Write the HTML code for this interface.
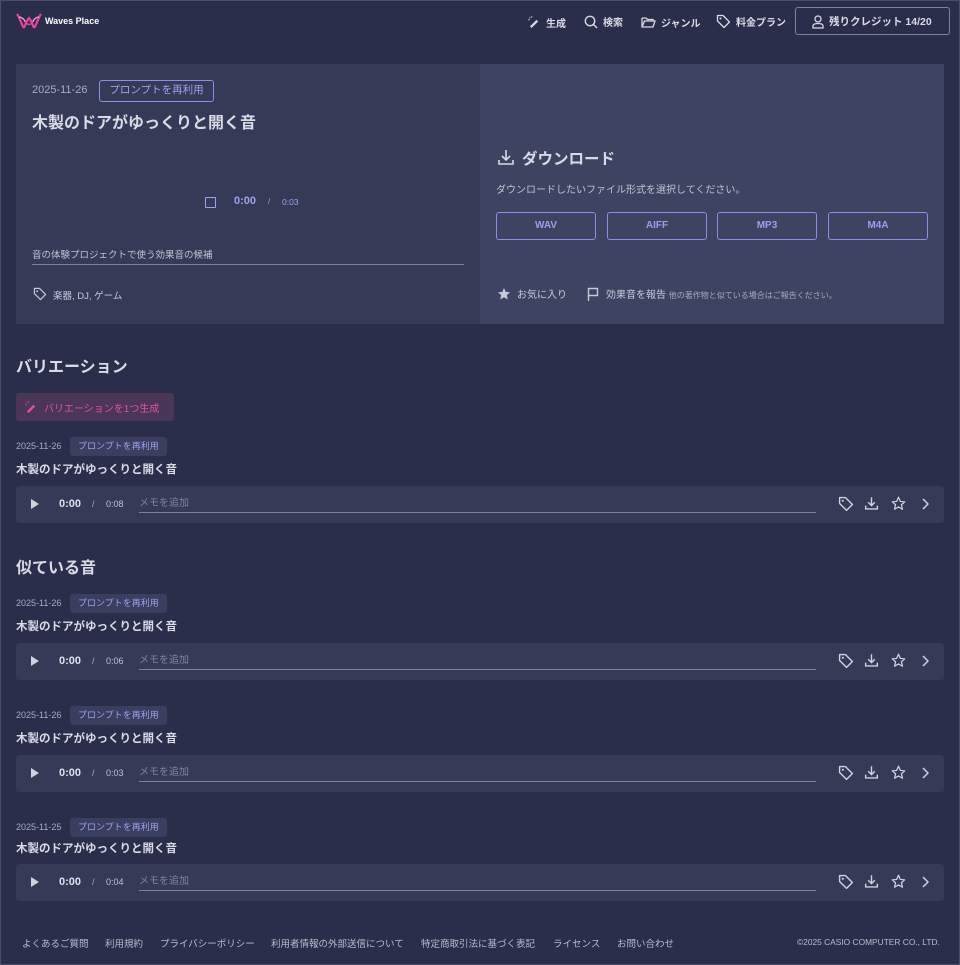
<!DOCTYPE html>
<html><head><meta charset="utf-8"><style>
*{box-sizing:border-box;margin:0;padding:0}
body{width:960px;height:965px;background:#2b2e4a;font-family:"Liberation Sans","Noto Sans CJK JP",sans-serif;color:#d6d8e6;position:relative;overflow:hidden}
.frame{position:absolute;left:0;top:0;width:960px;height:965px;border:1px solid #4a4e6a;pointer-events:none}
.a{position:absolute}
.nav{font-size:10px;font-weight:bold;color:#d8dae6;display:flex;align-items:center;gap:5px}
svg{display:block}
.fmt{position:absolute;top:212px;width:100px;height:28px;border:1.5px solid #8a8ee8;border-radius:3px;color:#9a9ef0;font-size:10px;font-weight:bold;text-align:center;line-height:25px}
.date{font-size:9px;color:#a8abc0}
.chip{font-size:9px;color:#9da2ee;background:#3a3f60;border-radius:3px;padding:0 8px;height:19px;line-height:19px}
.ttl{font-size:11.5px;font-weight:bold;color:#d8dae6}
.row{position:absolute;left:16px;width:928px;height:37px;background:#353a57;border-radius:3px}
.row .pl{position:absolute;left:14px;top:12px}
.row .t0{position:absolute;left:43px;top:12px;font-size:11px;font-weight:bold;color:#e0e2ee}
.row .sl{position:absolute;left:76px;top:13px;font-size:9px;color:#aab}
.row .td{position:absolute;left:90px;top:13px;font-size:9px;color:#c0c2d2}
.row .memo{position:absolute;left:123px;top:8px;width:677px;height:19px;border-bottom:1px solid #7a7f9c;font-size:10px;color:#7f849e}
.row .ic{position:absolute;top:10px}
.ft{font-size:9.5px;color:#b9bccd}
</style></head><body>
<svg class="a" style="left:16px;top:12px" width="26" height="18" viewBox="0 0 26 18"><path d="M1 2 C4 6 5 12 8 16 M8 16 C10 11 11 8 13 6 C15 8 16 11 18 16 M18 16 C21 12 22 6 25 2" stroke="#e8439f" stroke-width="2.2" fill="none"/><path d="M3 5 C6 5 9 8 9 10 M23 5 C20 5 17 8 17 10" stroke="#f4a6d2" stroke-width="1.2" fill="none"/><circle cx="13" cy="10" r="2.5" stroke="#e8439f" stroke-width="1.5" fill="none"/></svg>
<div class="a" style="left:45px;top:16px;font-size:9px;font-weight:bold;color:#fff">Waves Place</div>
<div class="a nav" style="left:528px;top:15px"><svg width="13" height="13" viewBox="0 0 14 14"><path d="M3 12 L10 5" stroke="#d8dae6" stroke-width="2.5"/><circle cx="2" cy="2" r=".7" fill="#d8dae6"/><circle cx="4" cy="1" r=".7" fill="#d8dae6"/><circle cx="1" cy="4" r=".7" fill="#d8dae6"/></svg>生成</div>
<div class="a nav" style="left:584px;top:14px"><svg width="14" height="14" viewBox="0 0 14 14"><circle cx="6" cy="6" r="4.7" stroke="#d8dae6" stroke-width="1.4" fill="none"/><path d="M9.5 9.5 L13 13" stroke="#d8dae6" stroke-width="1.4"/></svg>検索</div>
<div class="a nav" style="left:641px;top:15px"><svg width="15" height="13" viewBox="0 0 15 13"><path d="M1 2 H5 L6.5 3.5 H12 V5 M1 2 V11 H12 L14 5 H3.5 L1 11" stroke="#d8dae6" stroke-width="1.3" fill="none"/></svg>ジャンル</div>
<div class="a nav" style="left:716px;top:14px"><svg width="15" height="15" viewBox="0 0 15 15"><path d="M1.5 1.5 H7 L13.5 8 L8 13.5 L1.5 7 Z" stroke="#d8dae6" stroke-width="1.3" fill="none" stroke-linejoin="round"/><circle cx="4.5" cy="4.5" r="1" fill="#d8dae6"/></svg>料金プラン</div>
<div class="a" style="left:795px;top:7px;width:155px;height:28px;border:1px solid #7d82a0;border-radius:3px"></div>
<div class="a nav" style="left:812px;top:14px;font-size:10.5px"><svg width="12" height="14" viewBox="0 0 12 14"><circle cx="6" cy="4" r="3" stroke="#d8dae6" stroke-width="1.3" fill="none"/><path d="M1 13 V11 C1 9 3 8.5 6 8.5 C9 8.5 11 9 11 11 V13 Z" stroke="#d8dae6" stroke-width="1.3" fill="none"/></svg>残りクレジット 14/20</div>
<div class="a" style="left:16px;top:64px;width:464px;height:260px;background:#353a57"></div>
<div class="a" style="left:480px;top:64px;width:464px;height:260px;background:#3c4461"></div>
<div class="a" style="left:32px;top:84px;font-size:11px;color:#a8abc0">2025-11-26</div>
<div class="a" style="left:99px;top:80px;width:115px;height:22px;border:1.3px solid #8a8ee8;border-radius:3px;font-size:10.5px;color:#9ea2f0;text-align:center;line-height:19px">プロンプトを再利用</div>
<div class="a" style="left:32px;top:109px;font-size:16px;font-weight:bold;color:#d8dae6">木製のドアがゆっくりと開く音</div>
<div class="a" style="left:205px;top:197px;width:11px;height:11px;border:1.5px solid #9ea2f0;border-radius:1px"></div>
<div class="a" style="left:234px;top:195px;font-size:11px;font-weight:bold;color:#9ea2f0">0:00</div>
<div class="a" style="left:268px;top:197px;font-size:8px;color:#9ea2f0">/</div>
<div class="a" style="left:282px;top:197px;font-size:8.5px;color:#9ea2f0">0:03</div>
<div class="a" style="left:32px;top:247px;width:432px;height:18px;border-bottom:1px solid #7a7f9c;font-size:9.5px;color:#c0c2d2">音の体験プロジェクトで使う効果音の候補</div>
<svg class="a" style="left:33px;top:287px" width="14" height="14" viewBox="0 0 15 15"><path d="M1.5 1.5 H7 L13.5 8 L8 13.5 L1.5 7 Z" stroke="#c8cadb" stroke-width="1.3" fill="none" stroke-linejoin="round"/><circle cx="4.5" cy="4.5" r="1" fill="#c8cadb"/></svg>
<div class="a" style="left:53px;top:288px;font-size:9.5px;color:#c8cadb">楽器, DJ, ゲーム</div>
<svg class="a" style="left:497px;top:149px" width="18" height="17" viewBox="0 0 18 17"><path d="M9 1 V11 M5 7 L9 11 L13 7 M2 11 V15 H16 V11" stroke="#d8dae6" stroke-width="1.6" fill="none"/></svg>
<div class="a" style="left:522px;top:147px;font-size:15.5px;font-weight:bold;color:#d8dae6">ダウンロード</div>
<div class="a" style="left:496px;top:181px;font-size:10px;color:#c0c2d2">ダウンロードしたいファイル形式を選択してください。</div>
<div class="fmt" style="left:496px">WAV</div>
<div class="fmt" style="left:607px">AIFF</div>
<div class="fmt" style="left:717px">MP3</div>
<div class="fmt" style="left:828px">M4A</div>
<svg class="a" style="left:497px;top:287px" width="14" height="14" viewBox="0 0 24 24"><path d="M12 1.5 L15 8.5 L22.5 9 L16.8 14 L18.5 21.5 L12 17.5 L5.5 21.5 L7.2 14 L1.5 9 L9 8.5 Z" fill="#c8cadb"/></svg>
<div class="a" style="left:517px;top:286px;font-size:10px;color:#c8cadb">お気に入り</div>
<svg class="a" style="left:587px;top:287px" width="12" height="14" viewBox="0 0 12 14"><path d="M1.5 14 V1.5 H10.5 V8.5 H1.5" stroke="#c8cadb" stroke-width="1.4" fill="none"/></svg>
<div class="a" style="left:606px;top:286px;font-size:10px;color:#c8cadb">効果音を報告 <span style="font-size:8px;color:#a8abc0">他の著作物と似ている場合はご報告ください。</span></div>
<div class="a" style="left:16px;top:353px;font-size:16px;font-weight:bold;color:#d8dae6">バリエーション</div>
<div class="a" style="left:16px;top:393px;width:158px;height:28px;background:#4a3657;border-radius:3px"></div>
<svg class="a" style="left:25px;top:401px" width="13" height="13" viewBox="0 0 14 14"><path d="M3 12 L10 5" stroke="#e54fa8" stroke-width="2.6"/><circle cx="2" cy="2" r=".7" fill="#e54fa8"/><circle cx="4" cy="1" r=".7" fill="#e54fa8"/><circle cx="1" cy="4" r=".7" fill="#e54fa8"/></svg>
<div class="a" style="left:44px;top:400px;font-size:10px;color:#e54fa8">バリエーションを1つ生成</div>

<div class="a date" style="left:16px;top:441px">2025-11-26</div><div class="a chip" style="left:70px;top:437px">プロンプトを再利用</div>
<div class="a ttl" style="left:16px;top:461px">木製のドアがゆっくりと開く音</div>
<div class="row" style="top:486px"><svg class="pl" width="10" height="12"><path d="M1 1 L9 6 L1 11Z" fill="#d0d2e0"/></svg><div class="t0">0:00</div><div class="sl">/</div><div class="td">0:08</div><div class="memo">メモを追加</div><svg class="ic" style="left:822px" width="16" height="16" viewBox="0 0 15 15"><path d="M1.5 1.5 H7 L13.5 8 L8 13.5 L1.5 7 Z" stroke="#d0d2e0" stroke-width="1.3" fill="none" stroke-linejoin="round"/><circle cx="4.5" cy="4.5" r="1" fill="#d0d2e0"/></svg><svg class="ic" style="left:848px" width="15" height="15" viewBox="0 0 18 17"><path d="M9 1 V11 M5 7 L9 11 L13 7 M2 11 V15 H16 V11" stroke="#d0d2e0" stroke-width="1.7" fill="none"/></svg><svg class="ic" style="left:875px" width="15" height="15" viewBox="0 0 24 24"><path d="M12 2 L15 8.7 L22 9.3 L16.7 14 L18.3 21.2 L12 17.4 L5.7 21.2 L7.3 14 L2 9.3 L9 8.7 Z" stroke="#d0d2e0" stroke-width="2" fill="none" stroke-linejoin="round"/></svg><svg class="ic" style="left:905px;top:12px" width="8" height="12"><path d="M2 1 L7 6 L2 11" stroke="#d0d2e0" stroke-width="1.5" fill="none"/></svg></div>

<div class="a" style="left:16px;top:554px;font-size:16px;font-weight:bold;color:#d8dae6">似ている音</div>

<div class="a date" style="left:16px;top:598px">2025-11-26</div><div class="a chip" style="left:70px;top:594px">プロンプトを再利用</div>
<div class="a ttl" style="left:16px;top:618px">木製のドアがゆっくりと開く音</div>
<div class="row" style="top:643px"><svg class="pl" width="10" height="12"><path d="M1 1 L9 6 L1 11Z" fill="#d0d2e0"/></svg><div class="t0">0:00</div><div class="sl">/</div><div class="td">0:06</div><div class="memo">メモを追加</div><svg class="ic" style="left:822px" width="16" height="16" viewBox="0 0 15 15"><path d="M1.5 1.5 H7 L13.5 8 L8 13.5 L1.5 7 Z" stroke="#d0d2e0" stroke-width="1.3" fill="none" stroke-linejoin="round"/><circle cx="4.5" cy="4.5" r="1" fill="#d0d2e0"/></svg><svg class="ic" style="left:848px" width="15" height="15" viewBox="0 0 18 17"><path d="M9 1 V11 M5 7 L9 11 L13 7 M2 11 V15 H16 V11" stroke="#d0d2e0" stroke-width="1.7" fill="none"/></svg><svg class="ic" style="left:875px" width="15" height="15" viewBox="0 0 24 24"><path d="M12 2 L15 8.7 L22 9.3 L16.7 14 L18.3 21.2 L12 17.4 L5.7 21.2 L7.3 14 L2 9.3 L9 8.7 Z" stroke="#d0d2e0" stroke-width="2" fill="none" stroke-linejoin="round"/></svg><svg class="ic" style="left:905px;top:12px" width="8" height="12"><path d="M2 1 L7 6 L2 11" stroke="#d0d2e0" stroke-width="1.5" fill="none"/></svg></div>

<div class="a date" style="left:16px;top:710px">2025-11-26</div><div class="a chip" style="left:70px;top:706px">プロンプトを再利用</div>
<div class="a ttl" style="left:16px;top:730px">木製のドアがゆっくりと開く音</div>
<div class="row" style="top:755px"><svg class="pl" width="10" height="12"><path d="M1 1 L9 6 L1 11Z" fill="#d0d2e0"/></svg><div class="t0">0:00</div><div class="sl">/</div><div class="td">0:03</div><div class="memo">メモを追加</div><svg class="ic" style="left:822px" width="16" height="16" viewBox="0 0 15 15"><path d="M1.5 1.5 H7 L13.5 8 L8 13.5 L1.5 7 Z" stroke="#d0d2e0" stroke-width="1.3" fill="none" stroke-linejoin="round"/><circle cx="4.5" cy="4.5" r="1" fill="#d0d2e0"/></svg><svg class="ic" style="left:848px" width="15" height="15" viewBox="0 0 18 17"><path d="M9 1 V11 M5 7 L9 11 L13 7 M2 11 V15 H16 V11" stroke="#d0d2e0" stroke-width="1.7" fill="none"/></svg><svg class="ic" style="left:875px" width="15" height="15" viewBox="0 0 24 24"><path d="M12 2 L15 8.7 L22 9.3 L16.7 14 L18.3 21.2 L12 17.4 L5.7 21.2 L7.3 14 L2 9.3 L9 8.7 Z" stroke="#d0d2e0" stroke-width="2" fill="none" stroke-linejoin="round"/></svg><svg class="ic" style="left:905px;top:12px" width="8" height="12"><path d="M2 1 L7 6 L2 11" stroke="#d0d2e0" stroke-width="1.5" fill="none"/></svg></div>

<div class="a date" style="left:16px;top:822px">2025-11-25</div><div class="a chip" style="left:70px;top:818px">プロンプトを再利用</div>
<div class="a ttl" style="left:16px;top:840px">木製のドアがゆっくりと開く音</div>
<div class="row" style="top:864px"><svg class="pl" width="10" height="12"><path d="M1 1 L9 6 L1 11Z" fill="#d0d2e0"/></svg><div class="t0">0:00</div><div class="sl">/</div><div class="td">0:04</div><div class="memo">メモを追加</div><svg class="ic" style="left:822px" width="16" height="16" viewBox="0 0 15 15"><path d="M1.5 1.5 H7 L13.5 8 L8 13.5 L1.5 7 Z" stroke="#d0d2e0" stroke-width="1.3" fill="none" stroke-linejoin="round"/><circle cx="4.5" cy="4.5" r="1" fill="#d0d2e0"/></svg><svg class="ic" style="left:848px" width="15" height="15" viewBox="0 0 18 17"><path d="M9 1 V11 M5 7 L9 11 L13 7 M2 11 V15 H16 V11" stroke="#d0d2e0" stroke-width="1.7" fill="none"/></svg><svg class="ic" style="left:875px" width="15" height="15" viewBox="0 0 24 24"><path d="M12 2 L15 8.7 L22 9.3 L16.7 14 L18.3 21.2 L12 17.4 L5.7 21.2 L7.3 14 L2 9.3 L9 8.7 Z" stroke="#d0d2e0" stroke-width="2" fill="none" stroke-linejoin="round"/></svg><svg class="ic" style="left:905px;top:12px" width="8" height="12"><path d="M2 1 L7 6 L2 11" stroke="#d0d2e0" stroke-width="1.5" fill="none"/></svg></div>

<div class="a ft" style="left:22px;top:936px">よくあるご質問</div>
<div class="a ft" style="left:105px;top:936px">利用規約</div>
<div class="a ft" style="left:160px;top:936px">プライバシーポリシー</div>
<div class="a ft" style="left:271px;top:936px">利用者情報の外部送信について</div>
<div class="a ft" style="left:421px;top:936px">特定商取引法に基づく表記</div>
<div class="a ft" style="left:553px;top:936px">ライセンス</div>
<div class="a ft" style="left:617px;top:936px">お問い合わせ</div>
<div class="a ft" style="left:797px;top:937px;font-size:8.4px">©2025 CASIO COMPUTER CO., LTD.</div>
<div class="frame"></div>
</body></html>
